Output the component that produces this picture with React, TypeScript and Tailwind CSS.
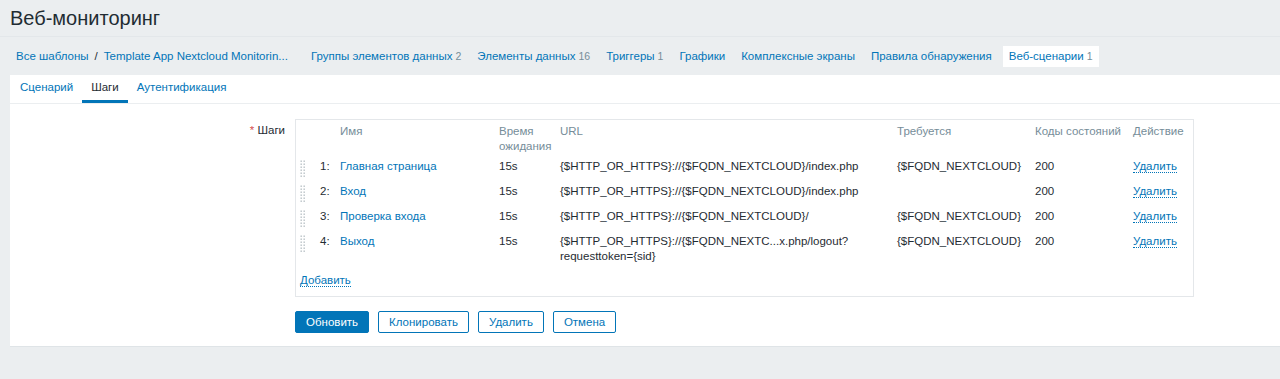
import React from 'react';

const navItems = [
  { label: 'Группы элементов данных', count: '2' },
  { label: 'Элементы данных', count: '16' },
  { label: 'Триггеры', count: '1' },
  { label: 'Графики' },
  { label: 'Комплексные экраны' },
  { label: 'Правила обнаружения' },
];

const steps = [
  { n: '1:', name: 'Главная страница', url: ['{$HTTP_OR_HTTPS}://{$FQDN_NEXTCLOUD}/index.php'], req: '{$FQDN_NEXTCLOUD}' },
  { n: '2:', name: 'Вход', url: ['{$HTTP_OR_HTTPS}://{$FQDN_NEXTCLOUD}/index.php'], req: '' },
  { n: '3:', name: 'Проверка входа', url: ['{$HTTP_OR_HTTPS}://{$FQDN_NEXTCLOUD}/'], req: '{$FQDN_NEXTCLOUD}' },
  { n: '4:', name: 'Выход', url: ['{$HTTP_OR_HTTPS}://{$FQDN_NEXTC...x.php/logout?', 'requesttoken={sid}'], req: '{$FQDN_NEXTCLOUD}' },
];

const cols = 'grid grid-cols-[20px_20px_159px_61px_337px_138px_98px_1fr]';

const DragHandle = () => (
  <div className="h-[15px]">
    <svg width="6" height="17" viewBox="0 0 6 17" className="block mt-[1px] overflow-visible">
      {[0, 1, 2, 3, 4, 5].map((r) =>
        [0, 1].map((c) => (
          <rect key={`${r}-${c}`} x={c * 3 + 0.5} y={r * 3 + 0.5} width="1.4" height="1.4" fill="#b7bfc4" />
        ))
      )}
    </svg>
  </div>
);

const App = () => {
  return (
    <div className="min-h-screen bg-[#ebeef0] font-['Liberation_Sans',Arial,sans-serif] text-[11.5px] leading-[15px] text-[#1f2c33]">
      <header className="h-[37px] px-[10px] flex items-center border-b border-[#e3e7ea]">
        <h1 className="text-[20px] leading-[24px] font-normal">Веб-мониторинг</h1>
      </header>

      <nav className="h-[38px] flex items-center pl-[16px]">
        <div className="flex items-center mr-[15px]">
          <a className="text-[#0275b8]">Все шаблоны</a>
          <span className="mx-[6px]">/</span>
          <a className="text-[#0275b8]">Template App Nextcloud Monitorin...</a>
        </div>
        {navItems.map((it) => (
          <a key={it.label} className="px-[8px] text-[#0275b8]">
            {it.label}
            {it.count && <span className="ml-[3px] text-[10.5px] text-[#768d99]">{it.count}</span>}
          </a>
        ))}
        <a className="ml-[3px] bg-white px-[6px] h-[21px] flex items-center text-[#0275b8]">
          Веб-сценарии<span className="ml-[3px] text-[10.5px] text-[#768d99]">1</span>
        </a>
      </nav>

      <main className="ml-[10px] bg-white border-b border-[#dfe4e7]">
        <div className="flex h-[29px] pl-[1px] border-b border-[#ebeef0]">
          <a className="px-[9px] flex items-center text-[#0275b8] border-b-[3px] border-transparent">Сценарий</a>
          <a className="px-[9px] flex items-center border-b-[3px] border-[#0275b8]">Шаги</a>
          <a className="px-[9px] flex items-center text-[#0275b8] border-b-[3px] border-transparent">Аутентификация</a>
        </div>

        <div className="pt-[15px] pb-[13px]">
          <div className="flex">
            <div className="w-[275px] shrink-0 text-right pt-[4px]">
              <span className="text-[#d64e4e]">*</span> Шаги
            </div>
            <div className="ml-[10px] w-[899px] border border-[#e4e7ea] pl-[4px] pr-[4px]">
              <div className={`${cols} pt-[4px] text-[#768d99]`}>
                <div />
                <div />
                <div>Имя</div>
                <div>Время<br />ожидания</div>
                <div>URL</div>
                <div>Требуется</div>
                <div>Коды состояний</div>
                <div>Действие</div>
              </div>
              {steps.map((s) => (
                <div key={s.n} className={`${cols} py-[5px]`}>
                  <DragHandle />
                  <div>{s.n}</div>
                  <div><a className="text-[#0275b8]">{s.name}</a></div>
                  <div>15s</div>
                  <div>
                    {s.url.map((u) => (
                      <div key={u}>{u}</div>
                    ))}
                  </div>
                  <div>{s.req}</div>
                  <div>200</div>
                  <div>
                    <a className="text-[#0275b8] border-b border-dotted border-[#0275b8]">Удалить</a>
                  </div>
                </div>
              ))}
              <div className="pt-[4px] pb-[8px]">
                <a className="text-[#0275b8] border-b border-dotted border-[#0275b8]">Добавить</a>
              </div>
            </div>
          </div>

          <div className="flex gap-[9px] ml-[285px] mt-[14px]">
            <button className="h-[22px] px-[10px] rounded-[2px] bg-[#0275b8] border border-[#0275b8] text-white">Обновить</button>
            <button className="h-[22px] px-[10px] rounded-[2px] bg-white border border-[#0275b8] text-[#0275b8]">Клонировать</button>
            <button className="h-[22px] px-[10px] rounded-[2px] bg-white border border-[#0275b8] text-[#0275b8]">Удалить</button>
            <button className="h-[22px] px-[10px] rounded-[2px] bg-white border border-[#0275b8] text-[#0275b8]">Отмена</button>
          </div>
        </div>
      </main>
    </div>
  );
};

export default App;
